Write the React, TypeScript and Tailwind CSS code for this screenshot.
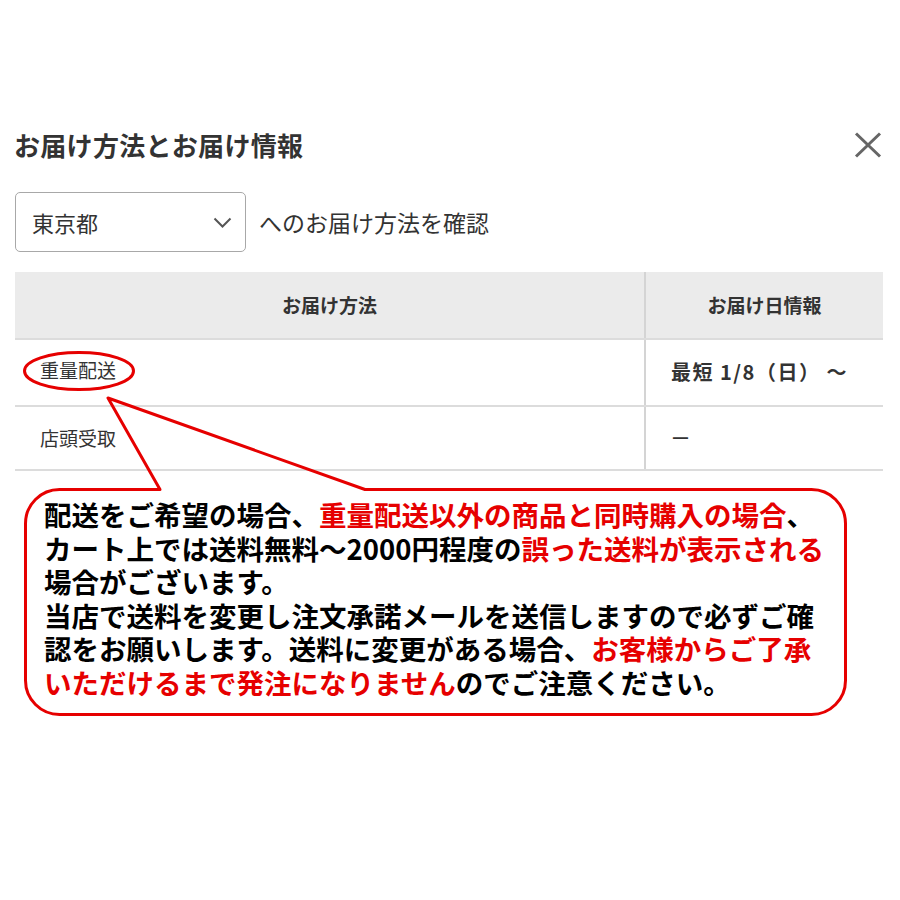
import React from 'react';

const RED = 'text-[#e60000]';

function CloseIcon() {
  return (
    <svg width="28" height="26" viewBox="0 0 28 26" className="text-[#666]">
      <path d="M2 1.5 L26 24.5 M26 1.5 L2 24.5" stroke="currentColor" strokeWidth="3" fill="none" />
    </svg>
  );
}

function Chevron() {
  return (
    <svg width="19" height="11" viewBox="0 0 19 11" className="text-[#555]">
      <polyline points="1.5,1.5 9.5,9.5 17.5,1.5" stroke="currentColor" strokeWidth="2" fill="none" />
    </svg>
  );
}

function Callout() {
  return (
    <div className="relative ml-[9px] mt-[17px] h-[228px] w-[823px] pl-[20px] pt-[10px]">
      {/* bubble outline with tail pointing at the row above */}
      <svg
        width="823"
        height="228"
        viewBox="0 0 823 228"
        className="pointer-events-none absolute left-0 top-0 overflow-visible"
      >
        <path
          d="M136 1.5 L84 -90 L341 1.5 L787.5 1.5 A34 34 0 0 1 821.5 35.5 L821.5 192.5 A34 34 0 0 1 787.5 226.5 L35.5 226.5 A34 34 0 0 1 1.5 192.5 L1.5 35.5 A34 34 0 0 1 35.5 1.5 Z"
          fill="none"
          stroke="#e60000"
          strokeWidth="3"
          strokeLinejoin="round"
        />
      </svg>
      <p className="whitespace-nowrap text-[27.5px] font-bold leading-[33.5px] text-black">
        配送をご希望の場合、<span className={RED}>重量配送以外の商品と同時購入の場合</span>、
        <br />
        カート上では送料無料～2000円程度の<span className={RED}>誤った送料が表示される</span>
        <br />
        場合がございます。
        <br />
        当店で送料を変更し注文承諾メールを送信しますので必ずご確
        <br />
        認をお願いします。送料に変更がある場合、<span className={RED}>お客様からご了承</span>
        <br />
        <span className={RED}>いただけるまで発注になりません</span>のでご注意ください。
      </p>
    </div>
  );
}

export default function App() {
  return (
    <div
      className="h-[900px] w-[900px] bg-white pl-[15px] pr-[17px] pt-[125px] text-[#333]"
      style={{ fontFamily: '"Noto Sans CJK JP", "Noto Sans", sans-serif' }}
    >
      <div className="flex h-[40px] items-center justify-between pr-[1px]">
        <h1 className="-ml-[1px] text-[26px] font-bold leading-none tracking-[0.3px]">お届け方法とお届け情報</h1>
        <CloseIcon />
      </div>

      <div className="mt-[27px] flex items-center gap-[13px]">
        <div className="flex h-[60px] w-[231px] items-center justify-between rounded-[5px] border-[1.5px] border-[#a8a8a8] pl-[16px] pr-[13px]">
          <span className="text-[22px] leading-none">東京都</span>
          <Chevron />
        </div>
        <span className="text-[23px] leading-none">へのお届け方法を確認</span>
      </div>

      <div className="mt-[20px] w-[868px]">
        <div className="grid h-[66px] grid-cols-[631px_237px] bg-[#ebebeb] text-[19px] font-bold">
          <div className="flex items-center justify-center border-r-2 border-[#d4d4d4]">お届け方法</div>
          <div className="flex items-center justify-center">お届け日情報</div>
        </div>
        <div className="grid h-[67px] grid-cols-[631px_237px] border-t-2 border-[#dcdcdc] text-[19px]">
          <div className="flex items-center border-r-2 border-[#d4d4d4] pb-[4px] pl-[25px]">
            <span className="relative">
              重量配送
              <svg
                width="114"
                height="42"
                viewBox="0 0 114 42"
                className="pointer-events-none absolute left-[-18px] top-[-6px]"
              >
                <ellipse cx="57" cy="21" rx="54.5" ry="18.5" fill="none" stroke="#e60000" strokeWidth="3" />
              </svg>
            </span>
          </div>
          <div className="flex items-center pb-[2px] pl-[25px] text-[20px] font-bold tracking-[1.5px]">最短 1/8（日） ～</div>
        </div>
        <div className="grid h-[66px] grid-cols-[631px_237px] border-y-2 border-[#dcdcdc] text-[19px]">
          <div className="flex items-center border-r-2 border-[#d4d4d4] pl-[25px]">店頭受取</div>
          <div className="flex items-center pl-[25px]">ー</div>
        </div>
      </div>

      <Callout />
    </div>
  );
}
